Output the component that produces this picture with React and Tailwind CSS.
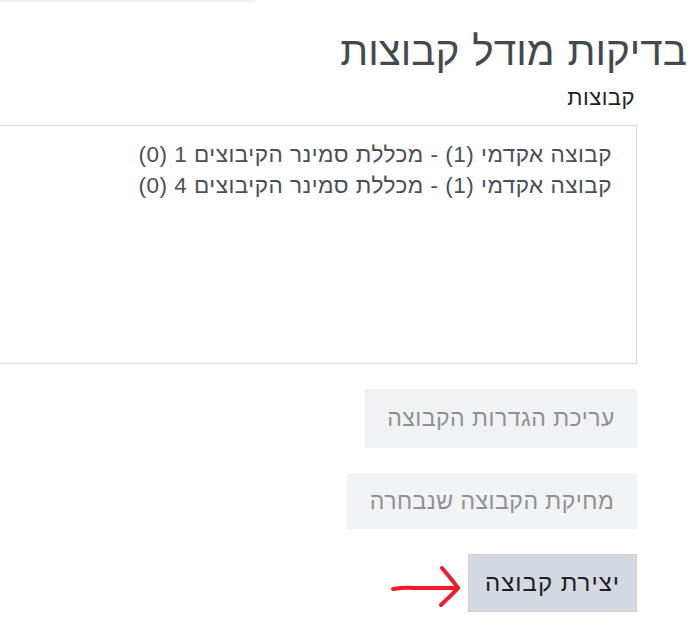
import React from 'react';

const groups = [
  'קבוצה אקדמי (1) - מכללת סמינר הקיבוצים 1 (0)',
  'קבוצה אקדמי (1) - מכללת סמינר הקיבוצים 4 (0)',
];

function RedArrow() {
  return (
    <svg width="72" height="44" viewBox="0 0 72 44" fill="none" className="mt-[11px]">
      <path d="M3 24 C10 23 16 22.5 24 23 L68 23" stroke="#ee1c25" strokeWidth="4" strokeLinecap="round" />
      <path
        d="M52 3 C57 9 63 16 68 23 C63 29 57 34 51 40"
        stroke="#ee1c25"
        strokeWidth="4"
        strokeLinecap="round"
        strokeLinejoin="round"
      />
    </svg>
  );
}

export default function App() {
  return (
    <div className="min-h-screen w-full overflow-hidden bg-white font-['Liberation_Sans',sans-serif]">
      <div dir="ltr" className="h-[2px] w-[255px] bg-[#f2f2f2]" />

      <div dir="rtl" className="pr-[8px]">
        <h1 className="mt-[23px] font-['DejaVu_Sans',sans-serif] text-[40.5px] font-light leading-[52px] text-[#44494e]">
          בדיקות מודל קבוצות
        </h1>
      </div>

      <div dir="rtl" className="pr-[58px]">
        <div className="mt-[9px] pr-[2px] text-[22px] leading-[24px] tracking-[0.5px] text-[#1d2125]">קבוצות</div>

        <div className="mt-[15px] h-[239px] w-[760px] border border-[#d6dbe0] bg-white pr-[24px] pt-[13px]">
          {groups.map((g) => (
            <div key={g} className="text-[22.5px] leading-[31px] tracking-[0.5px] text-[#495057]">
              {g}
            </div>
          ))}
        </div>

        <div className="mt-[25px] flex flex-col items-start">
          <button
            disabled
            className="flex h-[59px] w-[272px] items-center justify-center bg-[#f1f2f4] text-[23px] tracking-[0.5px] text-[#8d9196]"
          >
            עריכת הגדרות הקבוצה
          </button>
          <button
            disabled
            className="mt-[25px] flex h-[56px] w-[290px] items-center justify-center bg-[#f1f2f4] text-[23px] tracking-[0.5px] text-[#8d9196]"
          >
            מחיקת הקבוצה שנבחרה
          </button>
          <div className="mt-[25px] flex items-start gap-[6px]">
            <button className="flex h-[58px] w-[169px] items-center justify-center border border-[#ccd2d8] bg-[#d4d9df] text-[24px] tracking-[1px] text-[#1d2125]">
              יצירת קבוצה
            </button>
            <RedArrow />
          </div>
        </div>
      </div>
    </div>
  );
}
